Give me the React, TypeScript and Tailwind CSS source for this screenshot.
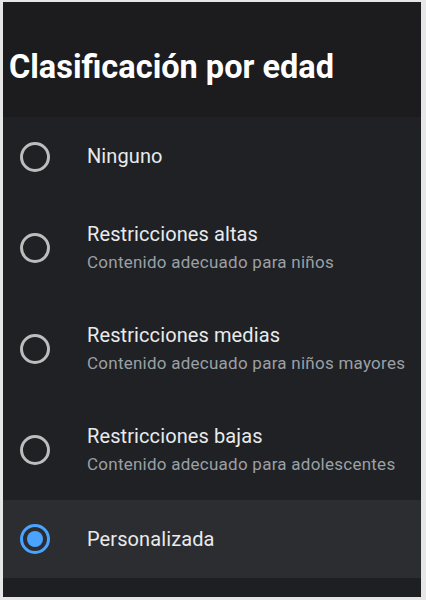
import React from "react";

type Item = { title: string; subtitle?: string; selected?: boolean };

const items: Item[] = [
  { title: "Ninguno" },
  { title: "Restricciones altas", subtitle: "Contenido adecuado para niños" },
  { title: "Restricciones medias", subtitle: "Contenido adecuado para niños mayores" },
  { title: "Restricciones bajas", subtitle: "Contenido adecuado para adolescentes" },
  { title: "Personalizada", selected: true },
];

function Radio({ selected }: { selected?: boolean }) {
  return (
    <svg width="32" height="32" viewBox="0 0 32 32" className="shrink-0">
      {selected ? (
        <>
          <circle cx="16" cy="16" r="13.5" fill="none" stroke="#4aa3ff" strokeWidth="3" />
          <circle cx="16" cy="16" r="8" fill="#4aa3ff" />
        </>
      ) : (
        <circle cx="16" cy="16" r="13.5" fill="none" stroke="#bdbdbd" strokeWidth="3" />
      )}
    </svg>
  );
}

export default function App() {
  return (
    <div
      className="w-[426px] h-[600px] bg-[#e6e6e6] pt-[2px] pl-[3px] pr-[5px] pb-[3px] overflow-hidden"
      style={{ fontFamily: "Roboto, 'Noto Sans', sans-serif" }}
    >
      <div className="w-full h-full flex flex-col bg-[#1e1f22]">
        <div className="h-[115px] shrink-0 bg-[#1c1c1e] flex items-center pl-[6px] pt-[14px]">
          <h1 className="text-[32.5px] font-bold text-white leading-[40px]">Clasificación por edad</h1>
        </div>
        <div className="flex flex-col bg-[#202124]">
          {items.map((it, i) => (
            <div
              key={i}
              className={`flex items-center ${it.subtitle ? "h-[101px]" : i === 0 ? "h-[80px]" : "h-[78px]"} ${
                it.selected ? "bg-[#2c2d31]" : ""
              }`}
            >
              <div className="w-[84px] pl-[16px] flex items-center">
                <Radio selected={it.selected} />
              </div>
              <div className={`flex flex-col ${i === 0 ? "-mt-[3px]" : ""}`}>
                <div className="text-[20px] text-[#e8eaed] leading-[26px] tracking-[0.1px]">{it.title}</div>
                {it.subtitle && (
                  <div className="text-[17px] text-[#9aa0a6] leading-[24px] mt-[3px] tracking-[0.25px]">
                    {it.subtitle}
                  </div>
                )}
              </div>
            </div>
          ))}
        </div>
        <div className="flex-1 bg-[#1e1f22]" />
      </div>
    </div>
  );
}
